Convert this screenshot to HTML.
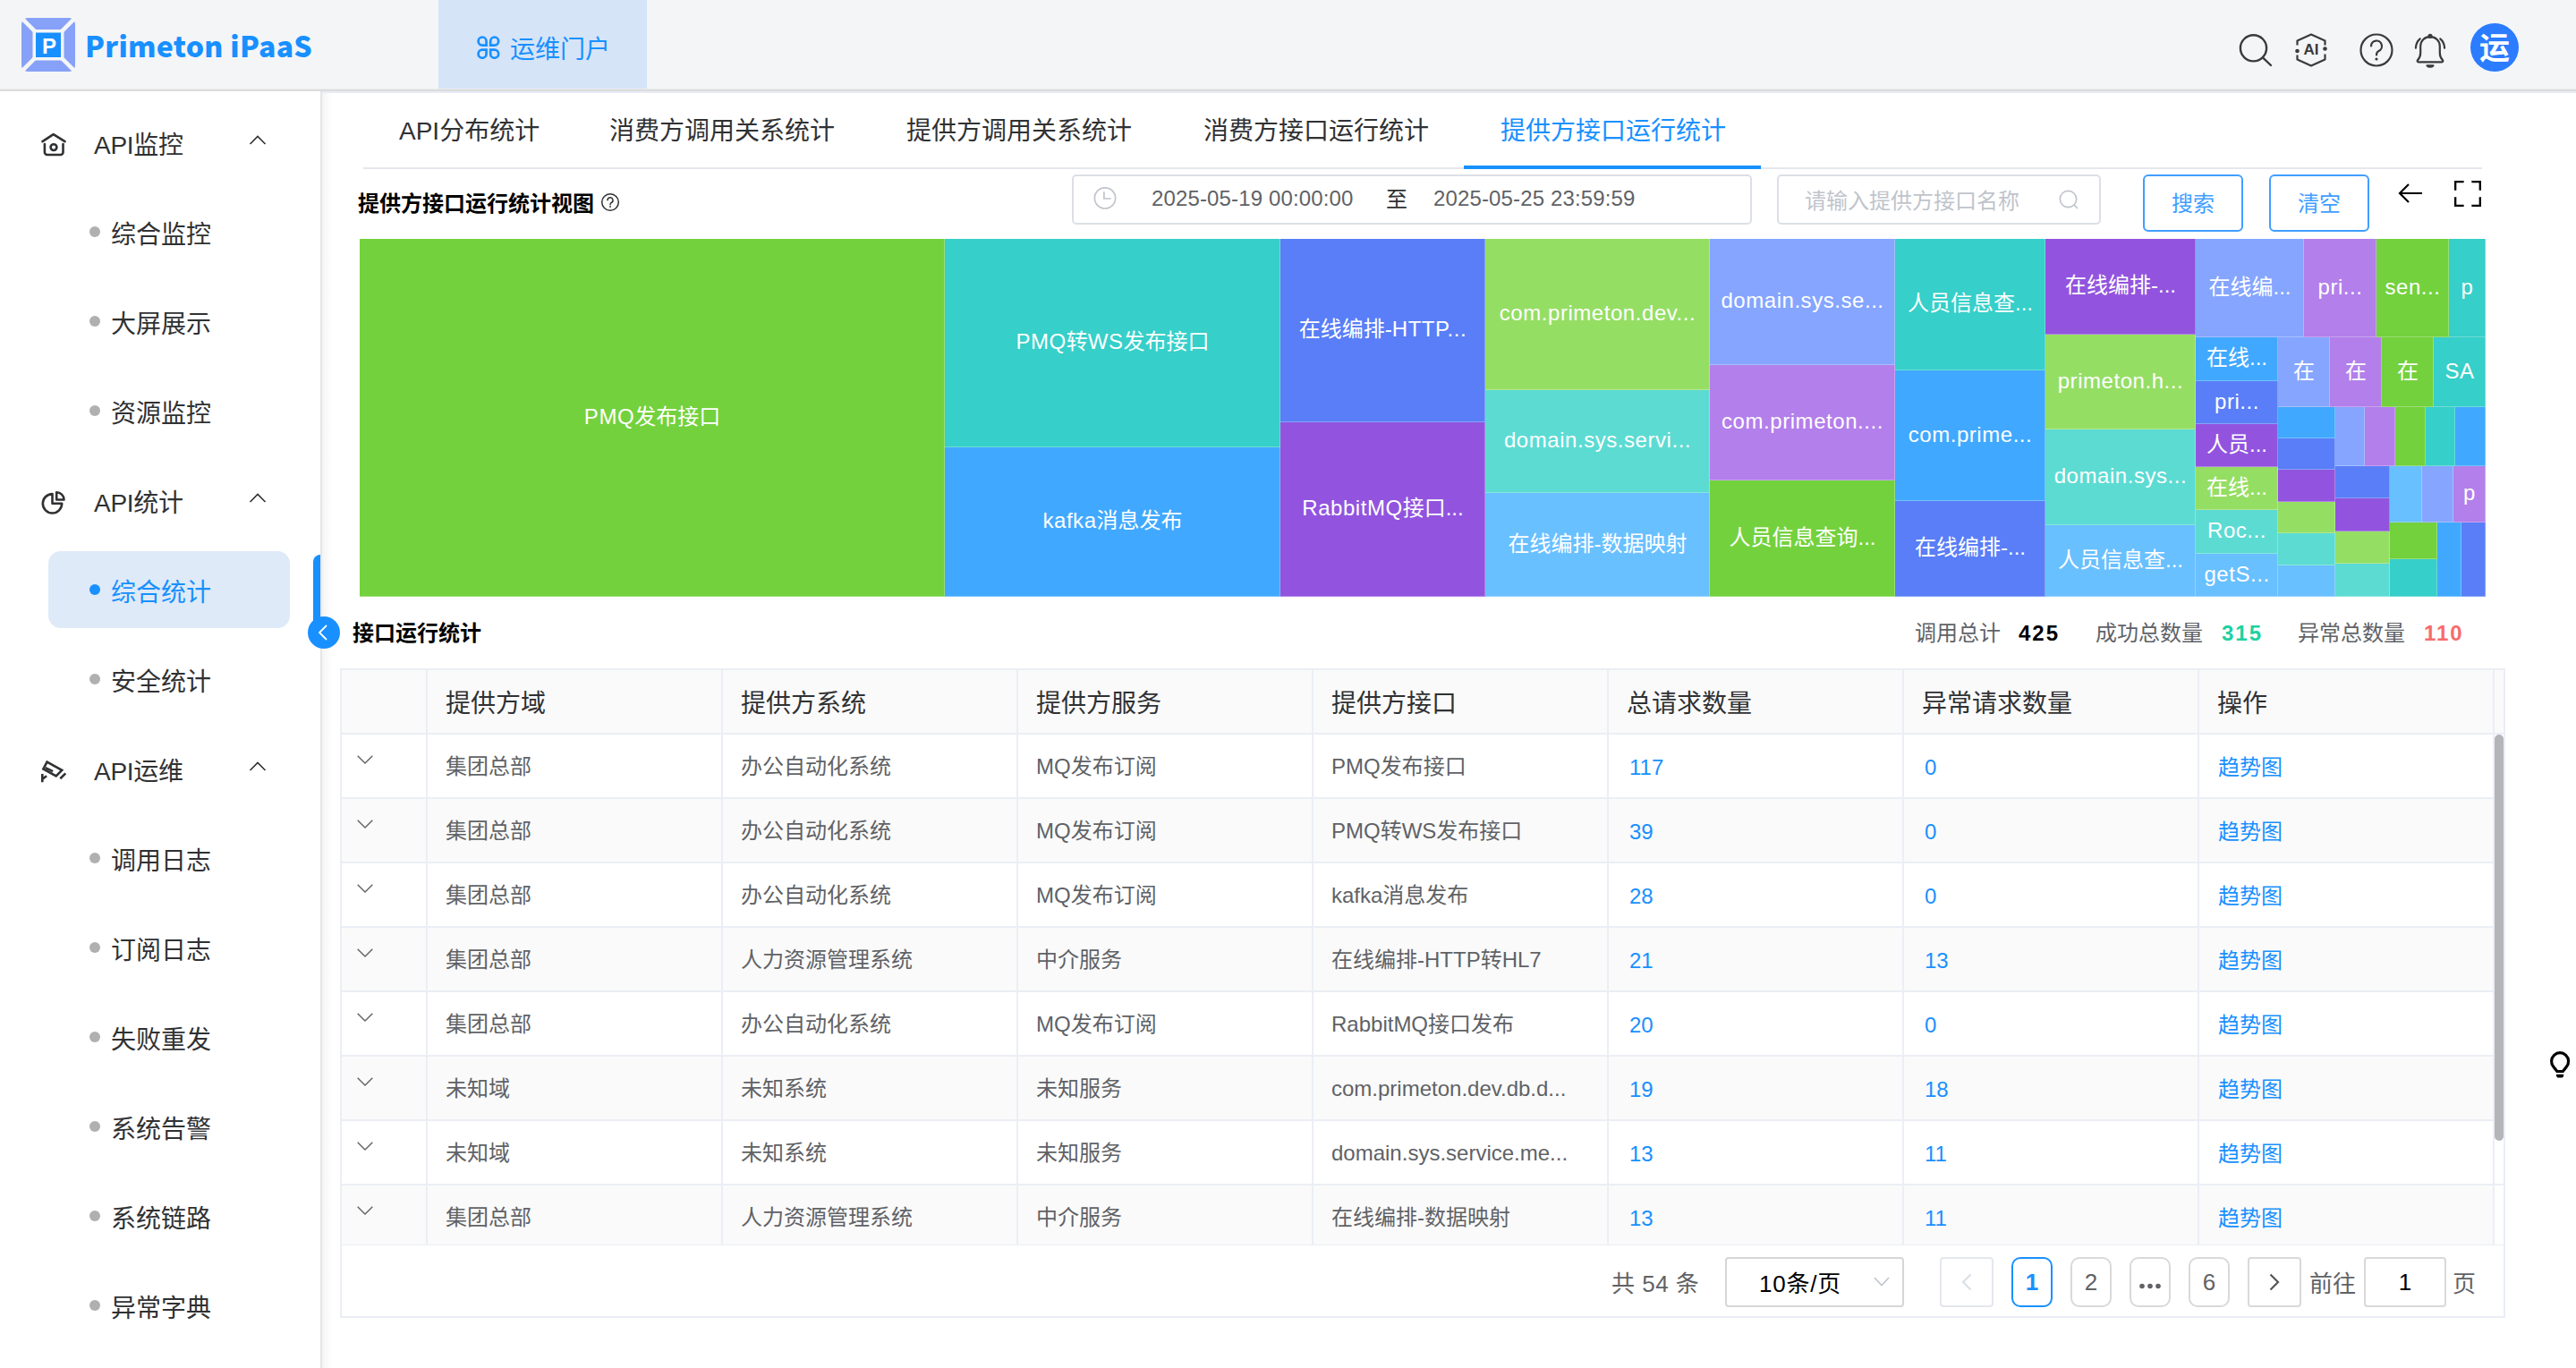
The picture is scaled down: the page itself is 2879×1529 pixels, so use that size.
<!DOCTYPE html>
<html lang="zh-CN"><head><meta charset="utf-8"><title>Primeton iPaaS</title>
<style>
*{box-sizing:border-box;margin:0;padding:0}
html,body{width:2879px;height:1529px;overflow:hidden;background:#fff}
body{font-family:"Liberation Sans","Noto Sans CJK SC",sans-serif;color:#303133;position:relative;font-size:28px}
.abs{position:absolute}
.t{position:absolute;white-space:nowrap;line-height:1;transform:translateY(-50%)}
#hdr{left:0;top:0;width:2879px;height:100px;background:#f4f5f7}
#hdrline{left:0;top:99px;width:2879px;height:3px;background:linear-gradient(#eaebed 0,#eaebed 33%,#dbdbdb 33%,#dcdcdc 100%)}
#navtab{left:490px;top:0;width:233px;height:100px;background:#d5e4f7}
#side{left:0;top:102px;width:358px;height:1427px;background:#fff}
#sideline{left:358px;top:102px;width:2px;height:1427px;background:#e5e5e6}
#sideshadow{left:360px;top:104px;width:11px;height:1425px;background:linear-gradient(90deg,#f4f4f5,#fff)}
#lav{left:360px;top:102px;width:2519px;height:2px;background:#e9ebf6}
.grp{font-size:28px;color:#303133}
.itm{font-size:28px;color:#303133}
.dot{position:absolute;width:12px;height:12px;border-radius:50%;background:#b0b0b0}
.tab{font-size:28px;color:#303133}
.l{letter-spacing:.55px}
.tile{position:absolute;overflow:hidden;padding-bottom:3px;color:#fff;font-size:24px;display:flex;align-items:center;justify-content:center;white-space:nowrap;line-height:1}
.cell{position:absolute;white-space:nowrap;line-height:1;transform:translateY(-50%);font-size:24px;color:#606266}
.hcell{position:absolute;white-space:nowrap;line-height:1;transform:translateY(-50%);font-size:28px;color:#303133}
.blue{color:#1890ff}
.vline{position:absolute;width:2px;background:#ebeef5}
.hline{position:absolute;height:2px;background:#ebeef5}
.pbtn{position:absolute;top:1405px;height:56px;border:2px solid #d9d9d9;border-radius:10px;background:#fff;font-size:26px;color:#606266;display:flex;align-items:center;justify-content:center;line-height:1}
</style></head>
<body>
<div id="hdr" class="abs"></div>
<div id="navtab" class="abs"></div>
<div id="hdrline" class="abs"></div>
<svg class="abs" style="left:24px;top:20px" width="60" height="60" viewBox="0 0 60 60">
<rect x="0" y="0" width="60" height="60" rx="7" fill="#86a1f7"/>
<path d="M0 0L60 60M60 0L0 60" stroke="#f4f5f7" stroke-width="4.5"/>
<rect x="12.5" y="13" width="35" height="34.5" fill="#f4f5f7"/>
<rect x="16" y="16.5" width="28" height="27.5" fill="#1890ff"/>
<text x="31" y="39.500" font-family='"Liberation Sans",sans-serif' font-weight="700" font-size="24" fill="#fff" text-anchor="middle">P</text>
</svg>
<div class="t" style="left:95px;top:50px;font-family:'Noto Sans CJK SC',sans-serif;font-size:32px;font-weight:900;color:#1890ff;letter-spacing:0.3px">Primeton iPaaS</div>
<svg class="abs" style="left:533px;top:40px" width="27" height="26" viewBox="0 0 27 26" fill="none" stroke="#1890ff" stroke-width="2.700">
<path d="M10.550 10.700H6.050a4.500 4.600 0 1 1 4.500-4.600z"/><path d="M15.150 10.700h4.500a4.500 4.600 0 1 0-4.500-4.600z"/><path d="M10.550 15.550H6.050a4.500 4.600 0 1 0 4.500 4.600z"/><path d="M15.150 15.550h4.500a4.500 4.600 0 1 1-4.500 4.600z"/></svg>
<div class="t" style="left:570px;top:56px;font-size:28px;color:#1890ff">运维门户</div>
<svg class="abs" style="left:2498px;top:34px" width="48" height="46" viewBox="0 0 48 46" fill="none" stroke="#3a3a3a" stroke-width="2.4" stroke-linecap="round">
<circle cx="20.500" cy="19.800" r="14.600"/><path d="M31.200 30.600L40 39"/></svg>
<svg class="abs" style="left:2562px;top:36px" width="42" height="40" viewBox="0 0 42 40" fill="none" stroke="#3a3a3a" stroke-width="2.2" stroke-linejoin="round">
<path d="M5.5 14.5v-5L21 2.5l15.5 7v5M36.500 24.5v6L21 37.5 5.500 30.500v-5"/>
<circle cx="5.5" cy="21" r="2.3" fill="#3a3a3a" stroke="none"/><circle cx="36.5" cy="18.5" r="2.3" fill="#3a3a3a" stroke="none"/>
<text x="21" y="24.800" font-family='"Liberation Sans",sans-serif' font-weight="700" font-size="17" fill="#3a3a3a" stroke="none" text-anchor="middle">AI</text></svg>
<svg class="abs" style="left:2636px;top:36px" width="40" height="40" viewBox="0 0 40 40" fill="none" stroke="#3a3a3a" stroke-width="2.2" stroke-linecap="round">
<circle cx="20" cy="20" r="17.5"/><path d="M14 15.500a6 6 0 1 1 8.500 5.500c-2 1-2.500 2-2.500 4.500"/><circle cx="20" cy="30" r="1.600" fill="#3a3a3a" stroke="none"/></svg>
<svg class="abs" style="left:2696px;top:36px" width="40" height="42" viewBox="0 0 40 42" fill="none" stroke="#3a3a3a" stroke-width="2.200" stroke-linecap="round" stroke-linejoin="round">
<path d="M7 33.300h26c1.500 0 1.600-1.500.9-2.200-2.200-2.200-3.100-4.200-3.100-8.100v-7.500c0-5.800-4.400-10.300-10.800-10.300S9.200 9.700 9.200 15.500V23c0 3.900-.9 5.900-3.100 8.100-.7.700-.6 2.200.9 2.200z"/>
<circle cx="20" cy="4.300" r="1.500"/><path d="M16.500 37.300a4 2.800 0 0 0 7 0z" fill="#3a3a3a"/>
<path d="M8.700 7.300C5.500 10 4 13.500 3.900 17.700M31.300 7.300c3.200 2.700 4.700 6.200 4.800 10.400"/></svg>
<div class="abs" style="left:2761px;top:26px;width:54px;height:54px;border-radius:50%;background:#2b7cff"></div>
<div class="t" style="left:2771px;top:54px;font-size:34px;font-weight:700;color:#fff">运</div>
<div id="side" class="abs"></div><div id="sideline" class="abs"></div><div id="sideshadow" class="abs"></div><div id="lav" class="abs"></div>
<div class="abs" style="left:54px;top:616px;width:270px;height:86px;border-radius:14px;background:#deeaf7"></div>
<div class="abs" style="left:350px;top:620px;width:8px;height:80px;border-radius:8px 0 0 0;background:#1890ff"></div>
<svg class="abs" style="left:45px;top:147px" width="30" height="30" viewBox="0 0 30 30" fill="none" stroke="#303133" stroke-width="2.600"><path d="M2.500 11.200L14.700 3.200 27.500 11.200" stroke-linecap="round" stroke-linejoin="round"/><path d="M4.900 14v9.200a2.800 2.800 0 0 0 2.800 2.800h15a2.800 2.800 0 0 0 2.800-2.800V14" stroke-linecap="round"/><circle cx="15" cy="17.600" r="3.400"/></svg>
<div class="t grp" style="left:105px;letter-spacing:-.3px;top:163px">API监控</div>
<svg class="abs" style="left:278px;top:151px" width="20" height="12" viewBox="0 0 20 12" fill="none" stroke="#303133" stroke-width="1.600"><path d="M1.500 10L10 1.500l8.500 8.500"/></svg>
<svg class="abs" style="left:45px;top:547px" width="30" height="30" viewBox="0 0 30 30" fill="none" stroke="#303133" stroke-width="2.600"><path d="M13.500 5.100A10.700 10.700 0 1 0 24.200 15.800H13.500z" stroke-linejoin="round"/><path d="M18.200 11.500V3.300a8.300 8.300 0 0 1 8.300 8.200z" stroke-linejoin="round"/></svg>
<div class="t grp" style="left:105px;letter-spacing:-.3px;top:563px">API统计</div>
<svg class="abs" style="left:278px;top:551px" width="20" height="12" viewBox="0 0 20 12" fill="none" stroke="#303133" stroke-width="1.600"><path d="M1.500 10L10 1.500l8.500 8.500"/></svg>
<svg class="abs" style="left:45px;top:847px" width="30" height="30" viewBox="0 0 30 30" fill="none" stroke="#303133" stroke-width="2.600"><path d="M7.600 4.600L24.200 13.800 17.700 20.300 3.400 12.400z" stroke-linejoin="miter"/><path d="M5.800 11.200l8.300 4M22.300 23.200l6-5.800M2.300 17.900v9.400M2.500 23.800l4.600-3.500"/></svg>
<div class="t grp" style="left:105px;letter-spacing:-.3px;top:863px">API运维</div>
<svg class="abs" style="left:278px;top:851px" width="20" height="12" viewBox="0 0 20 12" fill="none" stroke="#303133" stroke-width="1.600"><path d="M1.500 10L10 1.500l8.500 8.500"/></svg>
<div class="dot" style="left:100px;top:253px;"></div>
<div class="t itm" style="left:124px;top:263px;">综合监控</div>
<div class="dot" style="left:100px;top:353px;"></div>
<div class="t itm" style="left:124px;top:363px;">大屏展示</div>
<div class="dot" style="left:100px;top:453px;"></div>
<div class="t itm" style="left:124px;top:463px;">资源监控</div>
<div class="dot" style="left:100px;top:653px;background:#1890ff"></div>
<div class="t itm" style="left:124px;top:663px;color:#1890ff">综合统计</div>
<div class="dot" style="left:100px;top:753px;"></div>
<div class="t itm" style="left:124px;top:763px;">安全统计</div>
<div class="dot" style="left:100px;top:953px;"></div>
<div class="t itm" style="left:124px;top:963px;">调用日志</div>
<div class="dot" style="left:100px;top:1053px;"></div>
<div class="t itm" style="left:124px;top:1063px;">订阅日志</div>
<div class="dot" style="left:100px;top:1153px;"></div>
<div class="t itm" style="left:124px;top:1163px;">失败重发</div>
<div class="dot" style="left:100px;top:1253px;"></div>
<div class="t itm" style="left:124px;top:1263px;">系统告警</div>
<div class="dot" style="left:100px;top:1353px;"></div>
<div class="t itm" style="left:124px;top:1363px;">系统链路</div>
<div class="dot" style="left:100px;top:1453px;"></div>
<div class="t itm" style="left:124px;top:1463px;">异常字典</div>
<div class="abs" style="left:344px;top:689px;width:36px;height:36px;border-radius:50%;background:#1890ff"></div>
<svg class="abs" style="left:355px;top:698px" width="12" height="18" viewBox="0 0 12 18" fill="none" stroke="#fff" stroke-width="1.800"><path d="M10 1L2 9l8 8"/></svg>
<div class="t tab" style="left:446px;top:147px;">API分布统计</div>
<div class="t tab" style="left:681px;top:147px;">消费方调用关系统计</div>
<div class="t tab" style="left:1013px;top:147px;">提供方调用关系统计</div>
<div class="t tab" style="left:1345px;top:147px;">消费方接口运行统计</div>
<div class="t tab" style="left:1677px;top:147px;color:#1890ff">提供方接口运行统计</div>
<div class="abs" style="left:406px;top:187px;width:2368px;height:2px;background:#e4e7ed"></div>
<div class="abs" style="left:1636px;top:185px;width:332px;height:4px;background:#1890ff"></div>
<div class="t" style="left:400px;top:228px;font-size:24px;font-weight:700;color:#000">提供方接口运行统计视图</div>
<svg class="abs" style="left:671px;top:215px" width="22" height="22" viewBox="0 0 22 22" fill="none" stroke="#303133" stroke-width="1.500" stroke-linecap="round"><circle cx="11" cy="11" r="9.300"/><path d="M8 8.800a3 3 0 1 1 4.300 2.700c-1 .5-1.300 1-1.300 2.300"/><circle cx="11" cy="16" r=".9" fill="#303133" stroke="none"/></svg>
<div class="abs" style="left:1198px;top:195px;width:760px;height:56px;border:2px solid #dcdfe6;border-radius:5px;background:#fff"></div>
<svg class="abs" style="left:1222px;top:209px" width="27" height="27" viewBox="0 0 27 27" fill="none" stroke="#c0c4cc" stroke-width="1.700"><circle cx="13" cy="12.400" r="11.600"/><path d="M11.900 5.300V13h7.800"/></svg>
<div class="t" style="left:1287px;top:222px;font-size:24px;letter-spacing:.14px;color:#606266">2025-05-19 00:00:00</div>
<div class="t" style="left:1549px;top:223px;font-size:24px;color:#303133">至</div>
<div class="t" style="left:1602px;top:222px;font-size:24px;letter-spacing:.14px;color:#606266">2025-05-25 23:59:59</div>
<div class="abs" style="left:1986px;top:195px;width:362px;height:56px;border:2px solid #dcdfe6;border-radius:5px;background:#fff"></div>
<div class="t" style="left:2017px;top:225px;font-size:24px;color:#c0c4cc">请输入提供方接口名称</div>
<svg class="abs" style="left:2299px;top:211px" width="26" height="26" viewBox="0 0 26 26" fill="none" stroke="#c0c4cc" stroke-width="1.700" stroke-linecap="round"><circle cx="12.500" cy="11.500" r="9.200"/><path d="M19.200 18.200l3.300 3.300"/></svg>
<div class="abs" style="left:2395px;top:195px;width:112px;height:64px;border:2px solid #409eff;border-radius:6px;background:#fff"></div>
<div class="t" style="left:2427px;top:228px;font-size:24px;color:#409eff">搜索</div>
<div class="abs" style="left:2536px;top:195px;width:112px;height:64px;border:2px solid #409eff;border-radius:6px;background:#fff"></div>
<div class="t" style="left:2568px;top:228px;font-size:24px;color:#409eff">清空</div>
<svg class="abs" style="left:2680px;top:204px" width="28" height="24" viewBox="0 0 28 24" fill="none" stroke="#000" stroke-width="2.200" ><path d="M12 2L2 12l10 10M2 12h25"/></svg>
<svg class="abs" style="left:2743px;top:202px" width="30" height="29" viewBox="0 0 31 30" fill="none" stroke="#000" stroke-width="2.400"><path d="M1.200 11V1.200H11M20 1.200h9.800V11M29.800 19v9.800H20M11 28.800H1.200V19"/></svg>
<div class="abs" id="tm" style="left:402px;top:267px;width:2376px;height:400px;background:#fff;overflow:hidden">
<div class="tile" style="left:0px;top:0px;width:654px;height:400px;background:#73d13d;box-shadow:inset -1px -1px 0 rgba(255,255,255,.28)"><span class="l">PMQ</span>发布接口</div>
<div class="tile" style="left:654px;top:0px;width:375px;height:233px;background:#36cfc9;box-shadow:inset -1px -1px 0 rgba(255,255,255,.28)"><span class="l">PMQ</span>转<span class="l">WS</span>发布接口</div>
<div class="tile" style="left:654px;top:233px;width:375px;height:167px;background:#40a9ff;box-shadow:inset -1px -1px 0 rgba(255,255,255,.28)"><span class="l">kafka</span>消息发布</div>
<div class="tile" style="left:1029px;top:0px;width:229px;height:205px;background:#597ef7;box-shadow:inset -1px -1px 0 rgba(255,255,255,.28)">在线编排-<span class="l">HTTP...</span></div>
<div class="tile" style="left:1029px;top:205px;width:229px;height:195px;background:#9254de;box-shadow:inset -1px -1px 0 rgba(255,255,255,.28)"><span class="l">RabbitMQ</span>接口...</div>
<div class="tile" style="left:1258px;top:0px;width:251px;height:169px;background:#95de64;box-shadow:inset -1px -1px 0 rgba(255,255,255,.28)"><span class="l">com.primeton.dev...</span></div>
<div class="tile" style="left:1258px;top:169px;width:251px;height:115px;background:#5cdbd3;box-shadow:inset -1px -1px 0 rgba(255,255,255,.28)"><span class="l">domain.sys.servi...</span></div>
<div class="tile" style="left:1258px;top:284px;width:251px;height:116px;background:#69c0ff;box-shadow:inset -1px -1px 0 rgba(255,255,255,.28)">在线编排-数据映射</div>
<div class="tile" style="left:1509px;top:0px;width:207px;height:141px;background:#85a5ff;box-shadow:inset -1px -1px 0 rgba(255,255,255,.28)"><span class="l">domain.sys.se...</span></div>
<div class="tile" style="left:1509px;top:141px;width:207px;height:129px;background:#b37feb;box-shadow:inset -1px -1px 0 rgba(255,255,255,.28)"><span class="l">com.primeton....</span></div>
<div class="tile" style="left:1509px;top:270px;width:207px;height:130px;background:#73d13d;box-shadow:inset -1px -1px 0 rgba(255,255,255,.28)">人员信息查询...</div>
<div class="tile" style="left:1716px;top:0px;width:168px;height:147px;background:#36cfc9;box-shadow:inset -1px -1px 0 rgba(255,255,255,.28)">人员信息查...</div>
<div class="tile" style="left:1716px;top:147px;width:168px;height:146px;background:#40a9ff;box-shadow:inset -1px -1px 0 rgba(255,255,255,.28)"><span class="l">com.prime...</span></div>
<div class="tile" style="left:1716px;top:293px;width:168px;height:107px;background:#597ef7;box-shadow:inset -1px -1px 0 rgba(255,255,255,.28)">在线编排-...</div>
<div class="tile" style="left:1884px;top:0px;width:168px;height:107px;background:#9254de;box-shadow:inset -1px -1px 0 rgba(255,255,255,.28)">在线编排-...</div>
<div class="tile" style="left:1884px;top:107px;width:168px;height:106px;background:#95de64;box-shadow:inset -1px -1px 0 rgba(255,255,255,.28)"><span class="l">primeton.h...</span></div>
<div class="tile" style="left:1884px;top:213px;width:168px;height:107px;background:#5cdbd3;box-shadow:inset -1px -1px 0 rgba(255,255,255,.28)"><span class="l">domain.sys...</span></div>
<div class="tile" style="left:1884px;top:320px;width:168px;height:80px;background:#69c0ff;box-shadow:inset -1px -1px 0 rgba(255,255,255,.28)">人员信息查...</div>
<div class="tile" style="left:2052px;top:0px;width:121px;height:110px;background:#85a5ff;box-shadow:inset -1px -1px 0 rgba(255,255,255,.28)">在线编...</div>
<div class="tile" style="left:2173px;top:0px;width:81px;height:110px;background:#b37feb;box-shadow:inset -1px -1px 0 rgba(255,255,255,.28)"><span class="l">pri...</span></div>
<div class="tile" style="left:2254px;top:0px;width:81px;height:110px;background:#73d13d;box-shadow:inset -1px -1px 0 rgba(255,255,255,.28)"><span class="l">sen...</span></div>
<div class="tile" style="left:2335px;top:0px;width:41px;height:110px;background:#36cfc9;box-shadow:inset -1px -1px 0 rgba(255,255,255,.28)"><span class="l">p</span></div>
<div class="tile" style="left:2052px;top:110px;width:92px;height:49px;background:#40a9ff;box-shadow:inset -1px -1px 0 rgba(255,255,255,.28)">在线...</div>
<div class="tile" style="left:2052px;top:159px;width:92px;height:48px;background:#597ef7;box-shadow:inset -1px -1px 0 rgba(255,255,255,.28)"><span class="l">pri...</span></div>
<div class="tile" style="left:2052px;top:207px;width:92px;height:48px;background:#9254de;box-shadow:inset -1px -1px 0 rgba(255,255,255,.28)">人员...</div>
<div class="tile" style="left:2052px;top:255px;width:92px;height:48px;background:#95de64;box-shadow:inset -1px -1px 0 rgba(255,255,255,.28)">在线...</div>
<div class="tile" style="left:2052px;top:303px;width:92px;height:49px;background:#5cdbd3;box-shadow:inset -1px -1px 0 rgba(255,255,255,.28)"><span class="l">Roc...</span></div>
<div class="tile" style="left:2052px;top:352px;width:92px;height:48px;background:#69c0ff;box-shadow:inset -1px -1px 0 rgba(255,255,255,.28)"><span class="l">getS...</span></div>
<div class="tile" style="left:2144px;top:110px;width:58px;height:78px;background:#85a5ff;box-shadow:inset -1px -1px 0 rgba(255,255,255,.28)">在</div>
<div class="tile" style="left:2202px;top:110px;width:58px;height:78px;background:#b37feb;box-shadow:inset -1px -1px 0 rgba(255,255,255,.28)">在</div>
<div class="tile" style="left:2260px;top:110px;width:58px;height:78px;background:#73d13d;box-shadow:inset -1px -1px 0 rgba(255,255,255,.28)">在</div>
<div class="tile" style="left:2318px;top:110px;width:58px;height:78px;background:#36cfc9;box-shadow:inset -1px -1px 0 rgba(255,255,255,.28)"><span class="l">SA</span></div>
<div class="tile" style="left:2144px;top:188px;width:64px;height:35px;background:#40a9ff;box-shadow:inset -1px -1px 0 rgba(255,255,255,.28)"></div>
<div class="tile" style="left:2144px;top:223px;width:64px;height:35px;background:#597ef7;box-shadow:inset -1px -1px 0 rgba(255,255,255,.28)"></div>
<div class="tile" style="left:2144px;top:258px;width:64px;height:36px;background:#9254de;box-shadow:inset -1px -1px 0 rgba(255,255,255,.28)"></div>
<div class="tile" style="left:2144px;top:294px;width:64px;height:35px;background:#95de64;box-shadow:inset -1px -1px 0 rgba(255,255,255,.28)"></div>
<div class="tile" style="left:2144px;top:329px;width:64px;height:36px;background:#5cdbd3;box-shadow:inset -1px -1px 0 rgba(255,255,255,.28)"></div>
<div class="tile" style="left:2144px;top:365px;width:64px;height:35px;background:#69c0ff;box-shadow:inset -1px -1px 0 rgba(255,255,255,.28)"></div>
<div class="tile" style="left:2208px;top:188px;width:33px;height:66px;background:#85a5ff;box-shadow:inset -1px -1px 0 rgba(255,255,255,.28)"></div>
<div class="tile" style="left:2241px;top:188px;width:34px;height:66px;background:#b37feb;box-shadow:inset -1px -1px 0 rgba(255,255,255,.28)"></div>
<div class="tile" style="left:2275px;top:188px;width:34px;height:66px;background:#73d13d;box-shadow:inset -1px -1px 0 rgba(255,255,255,.28)"></div>
<div class="tile" style="left:2309px;top:188px;width:33px;height:66px;background:#36cfc9;box-shadow:inset -1px -1px 0 rgba(255,255,255,.28)"></div>
<div class="tile" style="left:2342px;top:188px;width:34px;height:66px;background:#40a9ff;box-shadow:inset -1px -1px 0 rgba(255,255,255,.28)"></div>
<div class="tile" style="left:2208px;top:254px;width:61px;height:36px;background:#597ef7;box-shadow:inset -1px -1px 0 rgba(255,255,255,.28)"></div>
<div class="tile" style="left:2208px;top:290px;width:61px;height:37px;background:#9254de;box-shadow:inset -1px -1px 0 rgba(255,255,255,.28)"></div>
<div class="tile" style="left:2208px;top:327px;width:61px;height:36px;background:#95de64;box-shadow:inset -1px -1px 0 rgba(255,255,255,.28)"></div>
<div class="tile" style="left:2208px;top:363px;width:61px;height:37px;background:#5cdbd3;box-shadow:inset -1px -1px 0 rgba(255,255,255,.28)"></div>
<div class="tile" style="left:2269px;top:254px;width:36px;height:63px;background:#69c0ff;box-shadow:inset -1px -1px 0 rgba(255,255,255,.28)"></div>
<div class="tile" style="left:2305px;top:254px;width:35px;height:63px;background:#85a5ff;box-shadow:inset -1px -1px 0 rgba(255,255,255,.28)"></div>
<div class="tile" style="left:2340px;top:254px;width:36px;height:63px;background:#b37feb;box-shadow:inset -1px -1px 0 rgba(255,255,255,.28)"><span class="l">p</span></div>
<div class="tile" style="left:2269px;top:317px;width:53px;height:41px;background:#73d13d;box-shadow:inset -1px -1px 0 rgba(255,255,255,.28)"></div>
<div class="tile" style="left:2269px;top:358px;width:53px;height:42px;background:#36cfc9;box-shadow:inset -1px -1px 0 rgba(255,255,255,.28)"></div>
<div class="tile" style="left:2322px;top:317px;width:27px;height:83px;background:#40a9ff;box-shadow:inset -1px -1px 0 rgba(255,255,255,.28)"></div>
<div class="tile" style="left:2349px;top:317px;width:27px;height:83px;background:#597ef7;box-shadow:inset -1px -1px 0 rgba(255,255,255,.28)"></div>
</div>
<div class="t" style="left:394px;top:708px;font-size:24px;font-weight:700;color:#000">接口运行统计</div>
<div class="t" style="left:2140px;top:708px;font-size:24px;color:#606266">调用总计</div>
<div class="t" style="left:2256px;top:708px;font-size:24px;font-weight:700;letter-spacing:2px;color:#000">425</div>
<div class="t" style="left:2342px;top:708px;font-size:24px;color:#606266">成功总数量</div>
<div class="t" style="left:2483px;top:708px;font-size:24px;font-weight:700;letter-spacing:2px;color:#1dd1a1">315</div>
<div class="t" style="left:2568px;top:708px;font-size:24px;color:#606266">异常总数量</div>
<div class="t" style="left:2709px;top:708px;font-size:24px;font-weight:700;letter-spacing:2px;color:#f56c6c">110</div>
<div class="abs" style="left:381px;top:748px;width:2418px;height:724px;background:#fff"></div>
<div class="abs" style="left:381px;top:748px;width:2418px;height:72px;background:#fafafa"></div>
<div class="abs" style="left:381px;top:892px;width:2406px;height:72px;background:#fafafa"></div>
<div class="abs" style="left:381px;top:1036px;width:2406px;height:72px;background:#fafafa"></div>
<div class="abs" style="left:381px;top:1180px;width:2406px;height:72px;background:#fafafa"></div>
<div class="abs" style="left:381px;top:1324px;width:2406px;height:68px;background:#fafafa"></div>
<div class="hline" style="left:381px;top:747px;width:2418px"></div>
<div class="hline" style="left:381px;top:819px;width:2418px"></div>
<div class="hline" style="left:381px;top:891px;width:2418px"></div>
<div class="hline" style="left:381px;top:963px;width:2418px"></div>
<div class="hline" style="left:381px;top:1035px;width:2418px"></div>
<div class="hline" style="left:381px;top:1107px;width:2418px"></div>
<div class="hline" style="left:381px;top:1179px;width:2418px"></div>
<div class="hline" style="left:381px;top:1251px;width:2418px"></div>
<div class="hline" style="left:381px;top:1323px;width:2418px"></div>
<div class="hline" style="left:381px;top:1391px;width:2418px"></div>
<div class="hline" style="left:381px;top:1471px;width:2418px"></div>
<div class="vline" style="left:380px;top:747px;height:645px"></div>
<div class="vline" style="left:476px;top:747px;height:645px"></div>
<div class="vline" style="left:806px;top:747px;height:645px"></div>
<div class="vline" style="left:1136px;top:747px;height:645px"></div>
<div class="vline" style="left:1466px;top:747px;height:645px"></div>
<div class="vline" style="left:1796px;top:747px;height:645px"></div>
<div class="vline" style="left:2126px;top:747px;height:645px"></div>
<div class="vline" style="left:2456px;top:747px;height:645px"></div>
<div class="vline" style="left:2786px;top:747px;height:645px"></div>
<div class="vline" style="left:380px;top:747px;height:726px"></div>
<div class="vline" style="left:2798px;top:747px;height:726px"></div>
<div class="hcell" style="left:498px;top:787px">提供方域</div>
<div class="hcell" style="left:828px;top:787px">提供方系统</div>
<div class="hcell" style="left:1158px;top:787px">提供方服务</div>
<div class="hcell" style="left:1488px;top:787px">提供方接口</div>
<div class="hcell" style="left:1818px;top:787px">总请求数量</div>
<div class="hcell" style="left:2148px;top:787px">异常请求数量</div>
<div class="hcell" style="left:2478px;top:787px">操作</div>
<svg class="abs" style="left:399px;top:844px" width="18" height="10" viewBox="0 0 18 10" fill="none" stroke="#606266" stroke-width="1.400"><path d="M.7 .7L9 9l8.300-8.300"/></svg>
<div class="cell" style="left:498px;top:857px">集团总部</div>
<div class="cell" style="left:828px;top:857px">办公自动化系统</div>
<div class="cell" style="left:1158px;top:857px">MQ发布订阅</div>
<div class="cell" style="left:1488px;top:857px">PMQ发布接口</div>
<div class="cell blue" style="left:1821px;top:858px">117</div>
<div class="cell blue" style="left:2151px;top:858px">0</div>
<div class="cell blue" style="left:2479px;top:858px">趋势图</div>
<svg class="abs" style="left:399px;top:916px" width="18" height="10" viewBox="0 0 18 10" fill="none" stroke="#606266" stroke-width="1.400"><path d="M.7 .7L9 9l8.300-8.300"/></svg>
<div class="cell" style="left:498px;top:929px">集团总部</div>
<div class="cell" style="left:828px;top:929px">办公自动化系统</div>
<div class="cell" style="left:1158px;top:929px">MQ发布订阅</div>
<div class="cell" style="left:1488px;top:929px">PMQ转WS发布接口</div>
<div class="cell blue" style="left:1821px;top:930px">39</div>
<div class="cell blue" style="left:2151px;top:930px">0</div>
<div class="cell blue" style="left:2479px;top:930px">趋势图</div>
<svg class="abs" style="left:399px;top:988px" width="18" height="10" viewBox="0 0 18 10" fill="none" stroke="#606266" stroke-width="1.400"><path d="M.7 .7L9 9l8.300-8.300"/></svg>
<div class="cell" style="left:498px;top:1001px">集团总部</div>
<div class="cell" style="left:828px;top:1001px">办公自动化系统</div>
<div class="cell" style="left:1158px;top:1001px">MQ发布订阅</div>
<div class="cell" style="left:1488px;top:1001px">kafka消息发布</div>
<div class="cell blue" style="left:1821px;top:1002px">28</div>
<div class="cell blue" style="left:2151px;top:1002px">0</div>
<div class="cell blue" style="left:2479px;top:1002px">趋势图</div>
<svg class="abs" style="left:399px;top:1060px" width="18" height="10" viewBox="0 0 18 10" fill="none" stroke="#606266" stroke-width="1.400"><path d="M.7 .7L9 9l8.300-8.300"/></svg>
<div class="cell" style="left:498px;top:1073px">集团总部</div>
<div class="cell" style="left:828px;top:1073px">人力资源管理系统</div>
<div class="cell" style="left:1158px;top:1073px">中介服务</div>
<div class="cell" style="left:1488px;top:1073px">在线编排-HTTP转HL7</div>
<div class="cell blue" style="left:1821px;top:1074px">21</div>
<div class="cell blue" style="left:2151px;top:1074px">13</div>
<div class="cell blue" style="left:2479px;top:1074px">趋势图</div>
<svg class="abs" style="left:399px;top:1132px" width="18" height="10" viewBox="0 0 18 10" fill="none" stroke="#606266" stroke-width="1.400"><path d="M.7 .7L9 9l8.300-8.300"/></svg>
<div class="cell" style="left:498px;top:1145px">集团总部</div>
<div class="cell" style="left:828px;top:1145px">办公自动化系统</div>
<div class="cell" style="left:1158px;top:1145px">MQ发布订阅</div>
<div class="cell" style="left:1488px;top:1145px">RabbitMQ接口发布</div>
<div class="cell blue" style="left:1821px;top:1146px">20</div>
<div class="cell blue" style="left:2151px;top:1146px">0</div>
<div class="cell blue" style="left:2479px;top:1146px">趋势图</div>
<svg class="abs" style="left:399px;top:1204px" width="18" height="10" viewBox="0 0 18 10" fill="none" stroke="#606266" stroke-width="1.400"><path d="M.7 .7L9 9l8.300-8.300"/></svg>
<div class="cell" style="left:498px;top:1217px">未知域</div>
<div class="cell" style="left:828px;top:1217px">未知系统</div>
<div class="cell" style="left:1158px;top:1217px">未知服务</div>
<div class="cell" style="left:1488px;top:1217px">com.primeton.dev.db.d...</div>
<div class="cell blue" style="left:1821px;top:1218px">19</div>
<div class="cell blue" style="left:2151px;top:1218px">18</div>
<div class="cell blue" style="left:2479px;top:1218px">趋势图</div>
<svg class="abs" style="left:399px;top:1276px" width="18" height="10" viewBox="0 0 18 10" fill="none" stroke="#606266" stroke-width="1.400"><path d="M.7 .7L9 9l8.300-8.300"/></svg>
<div class="cell" style="left:498px;top:1289px">未知域</div>
<div class="cell" style="left:828px;top:1289px">未知系统</div>
<div class="cell" style="left:1158px;top:1289px">未知服务</div>
<div class="cell" style="left:1488px;top:1289px">domain.sys.service.me...</div>
<div class="cell blue" style="left:1821px;top:1290px">13</div>
<div class="cell blue" style="left:2151px;top:1290px">11</div>
<div class="cell blue" style="left:2479px;top:1290px">趋势图</div>
<svg class="abs" style="left:399px;top:1348px" width="18" height="10" viewBox="0 0 18 10" fill="none" stroke="#606266" stroke-width="1.400"><path d="M.7 .7L9 9l8.300-8.300"/></svg>
<div class="cell" style="left:498px;top:1361px">集团总部</div>
<div class="cell" style="left:828px;top:1361px">人力资源管理系统</div>
<div class="cell" style="left:1158px;top:1361px">中介服务</div>
<div class="cell" style="left:1488px;top:1361px">在线编排-数据映射</div>
<div class="cell blue" style="left:1821px;top:1362px">13</div>
<div class="cell blue" style="left:2151px;top:1362px">11</div>
<div class="cell blue" style="left:2479px;top:1362px">趋势图</div>
<div class="abs" style="left:382px;top:1392px;width:2416px;height:79px;background:#fff"></div>
<div class="abs" style="left:2788px;top:821px;width:10px;height:454px;border-radius:5px;background:#b4b5b9"></div>
<div class="t" style="left:1801px;top:1435px;font-size:26px;letter-spacing:.5px;color:#606266">共 54 条</div>
<div class="pbtn" style="left:1928px;width:200px;border-radius:4px;border-color:#d6d6d6"></div>
<div class="t" style="left:1966px;top:1435px;font-size:26px;letter-spacing:.8px;color:#000">10条/页</div>
<svg class="abs" style="left:2094px;top:1427px" width="18" height="11" viewBox="0 0 18 11" fill="none" stroke="#c0c4cc" stroke-width="1.600"><path d="M1 1l8 8.500L17 1"/></svg>
<div class="pbtn" style="left:2168px;width:60px;border-radius:4px;border-color:#e4e7ed"><svg width="12" height="20" viewBox="0 0 12 20" fill="none" stroke="#dde1e8" stroke-width="2.400"><path d="M10.500 1.500L2 10l8.500 8.500"/></svg></div>
<div class="pbtn" style="left:2248px;width:46px;border-color:#1890ff;color:#1890ff;font-weight:700">1</div>
<div class="pbtn" style="left:2314px;width:46px">2</div>
<div class="pbtn" style="left:2380px;width:46px"><svg width="24" height="16" viewBox="0 0 24 16" fill="#606266"><circle cx="3" cy="12.500" r="2.800"/><circle cx="12" cy="12.500" r="2.800"/><circle cx="21" cy="12.500" r="2.800"/></svg></div>
<div class="pbtn" style="left:2446px;width:46px">6</div>
<div class="pbtn" style="left:2512px;width:60px;border-radius:4px"><svg width="12" height="20" viewBox="0 0 12 20" fill="none" stroke="#555" stroke-width="2.200"><path d="M1.500 1.500L10 10l-8.500 8.500"/></svg></div>
<div class="t" style="left:2581px;top:1435px;font-size:26px;color:#606266">前往</div>
<div class="pbtn" style="left:2642px;width:92px;color:#000;border-radius:4px">1</div>
<div class="t" style="left:2741px;top:1435px;font-size:26px;color:#606266">页</div>
<svg class="abs" style="left:2846px;top:1172px" width="30" height="36" viewBox="0 0 30 36" fill="none" stroke="#000" stroke-width="3.200" stroke-linejoin="round"><path d="M11.900 25.500L7.800 20.300A9.500 9.500 0 1 1 22.400 20.300L18.300 25.500z"/><path d="M11 28.800h8.200v1a2.800 2.800 0 0 1-2.800 2.800h-2.600a2.800 2.800 0 0 1-2.800-2.800z" fill="#000" stroke="none"/></svg>
<script>(function(){var w=window.innerWidth;if(w&&Math.abs(w-2879)>2){document.documentElement.style.zoom=w/2879;}})();</script>
</body></html>
